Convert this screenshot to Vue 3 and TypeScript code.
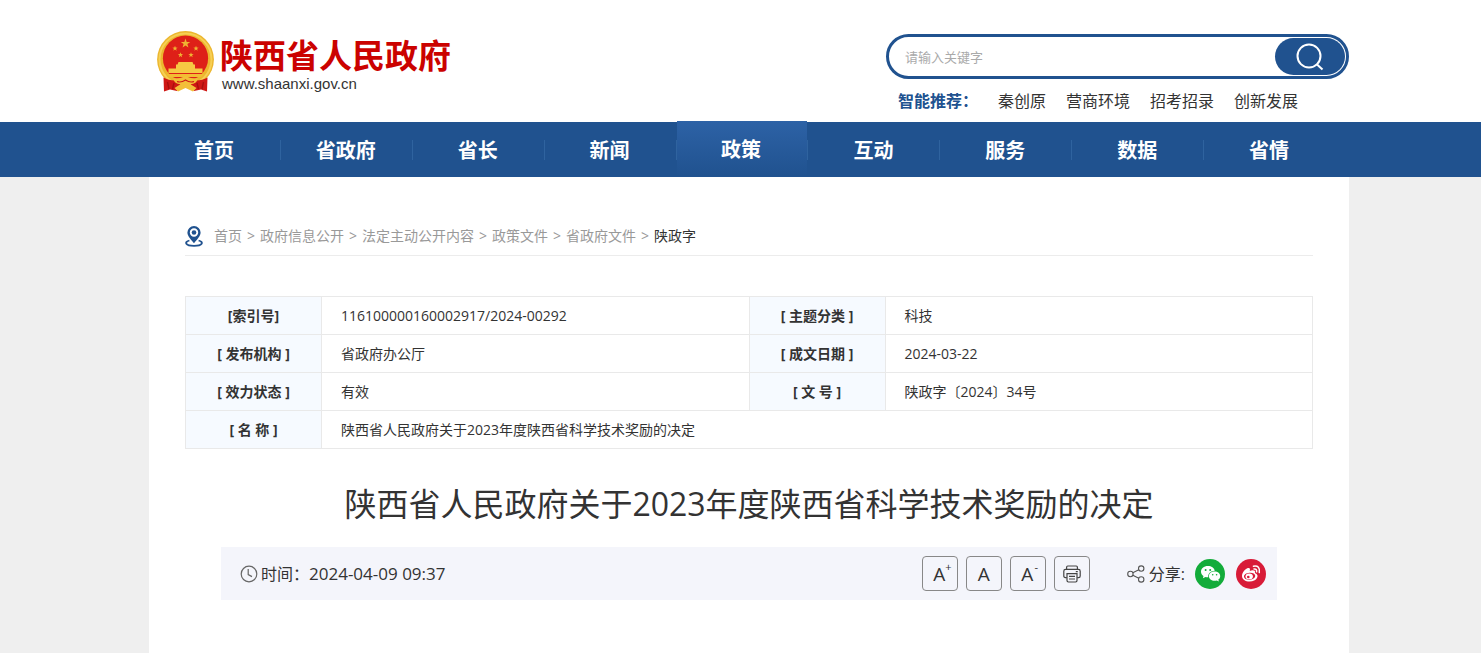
<script setup lang="ts">
interface NavItem { label: string; active?: boolean }

const hotWords: string[] = ['秦创原', '营商环境', '招考招录', '创新发展']

const nav: NavItem[] = [
  { label: '首页' },
  { label: '省政府' },
  { label: '省长' },
  { label: '新闻' },
  { label: '政策', active: true },
  { label: '互动' },
  { label: '服务' },
  { label: '数据' },
  { label: '省情' },
]

const crumbs: string[] = ['首页', '政府信息公开', '法定主动公开内容', '政策文件', '省政府文件']

const rows: string[][] = [
  ['[索引号]', '116100000160002917/2024-00292', '[ 主题分类 ]', '科技'],
  ['[ 发布机构 ]', '省政府办公厅', '[ 成文日期 ]', '2024-03-22'],
  ['[ 效力状态 ]', '有效', '[ 文 号 ]', '陕政字〔2024〕34号'],
]

const title = '陕西省人民政府关于2023年度陕西省科学技术奖励的决定'

function star(cx: number, cy: number, r: number): string {
  return Array.from({ length: 10 }, (_, i) => {
    const a = (Math.PI / 5) * i - Math.PI / 2
    const d = i % 2 ? r * 0.4 : r
    return `${(cx + d * Math.cos(a)).toFixed(2)},${(cy + d * Math.sin(a)).toFixed(2)}`
  }).join(' ')
}

const stars: string[] = [
  star(28.5, 12.5, 5),
  star(18, 17.5, 2.8),
  star(39, 17.5, 2.8),
  star(23.5, 24, 2.8),
  star(34, 24, 2.8),
]
</script>

<template>
  <div class="page">
    <header class="band">
      <div class="container head">
        <a class="logo" href="#">
          <svg class="emblem" viewBox="0 0 58 62" aria-hidden="true">
            <circle cx="28.5" cy="28.5" r="28.4" fill="#ecb62e" />
            <circle cx="28.5" cy="28.5" r="26" fill="none" stroke="#f6cf55" stroke-width="2" />
            <circle cx="28.5" cy="27.2" r="22.6" fill="#de2018" />
            <polygon v-for="s in stars" :key="s" :points="s" fill="#efb432" />
            <path d="M20.5 33.5 L21.5 31 H35.5 L36.5 33.5Z M19 33.5 H38 V37.6 H45.5 V42 H11.5 V37.6 H19Z" fill="#f6c943" />
            <path d="M10 43 H47 L44 46 H13Z" fill="#f3bd33" />
            <path d="M6.5 46.5 Q12 50 20 49.5 L24 53 L20 60 L13 58.5 L7 60.5Z" fill="#cf1714" />
            <path d="M50.5 46.5 Q45 50 37 49.5 L33 53 L37 60 L44 58.5 L50 60.5Z" fill="#cf1714" />
            <path d="M10.5 51 L12 58 M46.5 51 L45 58 M17 52 L15.5 58 M40 52 L41.5 58" stroke="#a90f0d" stroke-width="1.4" />
            <path d="M16 47.5 Q24 47.5 28.5 45 Q33 47.5 41 47.5 Q39.5 53 33.5 53.2 L39.5 57 L36 60.5 L28.5 57 L21 60.5 L17.5 57 L23.5 53.2 Q17.5 53 16 47.5Z" fill="#f3bf38" />
            <path d="M20 50.5 Q24 52 28.5 49 Q33 52 37 50.5" fill="none" stroke="#cf1714" stroke-width="1.2" />
          </svg>
          <span class="logo-text">
            <strong class="logo-name">陕西省人民政府</strong>
            <span class="logo-url">www.shaanxi.gov.cn</span>
          </span>
        </a>
        <div class="search-area">
          <form class="search" @submit.prevent>
            <input type="text" placeholder="请输入关键字" aria-label="请输入关键字" />
            <button type="submit" aria-label="搜索">
              <svg viewBox="0 0 28 28" fill="none" stroke="#fff" stroke-width="2" aria-hidden="true">
                <circle cx="13" cy="13" r="11.5" />
                <path d="M20.5 21 L26.5 26.5" />
              </svg>
            </button>
          </form>
          <div class="hot">
            <strong>智能推荐：</strong>
            <a v-for="w in hotWords" :key="w" href="#">{{ w }}</a>
          </div>
        </div>
      </div>
    </header>

    <nav class="band nav">
      <ul class="container">
        <li v-for="n in nav" :key="n.label" :class="{ active: n.active }">
          <a href="#">{{ n.label }}</a>
        </li>
      </ul>
    </nav>

    <div class="band body">
      <main class="container sheet">
        <div class="crumbs">
          <svg class="pin" viewBox="0 0 18 21" aria-hidden="true">
            <path d="M4.4 14.5 C-1 16 .2 19.8 9 19.8 C17.8 19.8 19 16 13.6 14.5" fill="none" stroke="#20528f" stroke-width="1.8" />
            <path fill-rule="evenodd" d="M9 0 A6.6 6.6 0 0 1 15.6 6.6 C15.6 10.5 11.5 14 9 17.3 C6.5 14 2.4 10.5 2.4 6.6 A6.6 6.6 0 0 1 9 0Z M9 2.3 A4.2 4.2 0 1 0 9 10.7 A4.2 4.2 0 1 0 9 2.3Z" fill="#20528f" />
            <circle cx="9" cy="6.5" r="2.3" fill="#20528f" />
          </svg>
          <template v-for="c in crumbs" :key="c">
            <a href="#">{{ c }}</a><span class="sep">&gt;</span>
          </template>
          <a class="current" href="#">陕政字</a>
        </div>

        <table class="info">
          <colgroup>
            <col class="key" /><col /><col class="key" /><col />
          </colgroup>
          <tbody>
            <tr v-for="r in rows" :key="r[0]">
              <th scope="row">{{ r[0] }}</th>
              <td>{{ r[1] }}</td>
              <th scope="row">{{ r[2] }}</th>
              <td>{{ r[3] }}</td>
            </tr>
            <tr>
              <th scope="row">[ 名 称 ]</th>
              <td colspan="3">{{ title }}</td>
            </tr>
          </tbody>
        </table>

        <h1>{{ title }}</h1>

        <div class="meta">
          <svg class="clock" viewBox="0 0 18 18" fill="none" stroke="#666" stroke-width="1.2" aria-hidden="true">
            <circle cx="9" cy="9" r="7.8" />
            <path d="M8.2 4 V9.6 L12 11.6" />
          </svg>
          <span class="label">时间：</span>
          <time datetime="2024-04-09T09:37">2024-04-09 09:37</time>
          <div class="tools">
            <button type="button" class="scaled" aria-label="放大字号">A<sup>+</sup></button>
            <button type="button" aria-label="默认字号">A</button>
            <button type="button" class="scaled" aria-label="缩小字号">A<sup>-</sup></button>
            <button type="button" aria-label="打印">
              <svg viewBox="0 0 18 18" fill="none" stroke="#444" stroke-width="1.2" aria-hidden="true">
                <path d="M3.6 4.4 V2.2 Q3.6 1 4.8 1 H13.2 Q14.4 1 14.4 2.2 V4.4" />
                <path d="M3.8 12.6 H2.4 Q.8 12.6 .8 11 V6.2 Q.8 4.4 2.6 4.4 H15.4 Q17.2 4.4 17.2 6.2 V11 Q17.2 12.6 15.6 12.6 H14.2" />
                <path d="M4 8.6 H14 V15.6 Q14 17 12.6 17 H5.4 Q4 17 4 15.6Z M6 11.4 H12 M6 14 H12 M12.8 6.6 H14.8" />
              </svg>
            </button>
          </div>
          <div class="share">
            <svg class="share-icon" viewBox="0 0 18 18" fill="none" stroke="#555" stroke-width="1.1" aria-hidden="true">
              <circle cx="3.4" cy="9" r="2.7" />
              <circle cx="14.2" cy="3.6" r="2.7" />
              <circle cx="14.2" cy="14.4" r="2.7" />
              <path d="M5.8 7.8 L11.8 4.8 M5.8 10.2 L11.8 13.2" />
            </svg>
            <span class="label">分享:</span>
            <a class="round wechat" href="#" aria-label="微信">
              <svg viewBox="0 0 30 30" aria-hidden="true">
                <path fill="#fff" d="M13 7 C8.6 7 6 9.7 6 12.7 C6 14.6 7 16.1 8.5 17.1 L7.9 19.3 L10.5 18 Q11.9 18.4 13.3 18.3 C12.7 14.8 15.6 11.9 19.8 11.8 C19.2 9 16.4 7 13 7Z" />
                <path fill="#fff" d="M19.6 12.6 C16.2 12.6 13.9 14.7 13.9 17.2 C13.9 19.8 16.4 21.8 19.6 21.8 Q20.7 21.8 21.8 21.4 L23.9 22.5 L23.3 20.6 C24.5 19.7 25.2 18.6 25.2 17.2 C25.2 14.7 22.9 12.6 19.6 12.6Z" />
                <g fill="#13ac3a">
                  <circle cx="10.6" cy="11.1" r="1" /><circle cx="15.2" cy="11.1" r="1" />
                  <circle cx="17.7" cy="15.8" r=".8" /><circle cx="21.6" cy="15.8" r=".8" />
                </g>
              </svg>
            </a>
            <a class="round weibo" href="#" aria-label="微博">
              <svg viewBox="0 0 30 30" aria-hidden="true">
                <path fill="#fff" fill-rule="evenodd" d="M12.2 9 C14.2 8.7 14.3 10.6 13.7 12 C16.3 11 19.9 10.8 18.9 14 C24.4 15.9 20.8 22.6 13.6 22.6 C9.4 22.6 6 20.5 6 17 C6 13.6 9.6 9.4 12.2 9Z M13.4 13.7 C10.2 14 7.8 15.7 8 17.7 C8.2 19.8 10.9 21 14 20.7 C17.2 20.4 19.4 18.7 19.2 16.6 C19 14.6 16.5 13.4 13.4 13.7Z" />
                <ellipse cx="13.2" cy="17.4" rx="3.7" ry="2.9" fill="#fff" />
                <circle cx="12.3" cy="18" r="1.3" fill="#d81b38" />
                <path d="M18 10 Q21 9.6 20.6 12.8 M17.4 7.2 Q24.4 6 23.3 13.6" fill="none" stroke="#fff" stroke-width="1.5" stroke-linecap="round" />
              </svg>
            </a>
          </div>
        </div>
      </main>
    </div>
  </div>
</template>

<style>
body {
  margin: 0;
  background: #efefef;
}
</style>

<style scoped>
* {
  box-sizing: border-box;
}
.page {
  min-height: 100vh;
  display: flex;
  flex-direction: column;
  font-family: "Open Sans", "Noto Sans CJK SC", sans-serif;
  font-size: 14px;
  color: #333;
  background: #efefef;
}
a {
  color: inherit;
  text-decoration: none;
}
svg {
  display: block;
}
.band {
  padding-left: 17px;
}
.container {
  max-width: 1200px;
  margin: 0 auto;
}
header {
  background: #fff;
}
.head {
  display: flex;
  justify-content: space-between;
  height: 122px;
}
.logo {
  display: flex;
  align-items: flex-start;
  gap: 5px;
  padding: 31px 0 0 8px;
}
.emblem {
  width: 58px;
  height: 62px;
}
.logo-text {
  display: flex;
  flex-direction: column;
  padding-top: 7px;
}
.logo-name {
  font-size: 33px;
  line-height: 36px;
  font-weight: 700;
  color: #cb0200;
}
.logo-url {
  padding-left: 2px;
  font: 15px/20px "Liberation Sans", Arial, sans-serif;
}
.search-area {
  width: 463px;
  padding-top: 34px;
}
.search {
  display: flex;
  height: 45px;
  border: 3px solid #20528f;
  border-radius: 23px;
}
.search input {
  flex: 1;
  min-width: 0;
  margin: 0;
  padding: 1px 16px;
  border: 0;
  outline: 0;
  background: none;
  font: 13px/20px "Open Sans", "Noto Sans CJK SC", sans-serif;
  color: #333;
}
.search input::placeholder {
  color: #aaa;
}
.search button {
  display: flex;
  align-items: center;
  justify-content: center;
  width: 70px;
  margin: 1px;
  padding: 0;
  border: 0;
  border-radius: 19px;
  background: #20528f;
}
.search button svg {
  width: 28px;
  height: 28px;
}
.hot {
  display: flex;
  gap: 20px;
  padding: 10px 0 0 12px;
  font-size: 16px;
  line-height: 24px;
  white-space: nowrap;
}
.hot strong {
  width: 80px;
  color: #20528f;
}
.nav {
  background: #20528f;
}
.nav ul {
  display: flex;
  padding: 0 13px 0 0;
  list-style: none;
}
.nav li {
  flex: 1;
  height: 55px;
  text-align: center;
  font-size: 20px;
  line-height: 57px;
  font-weight: 700;
  color: #fff;
  background: linear-gradient(#2f639f, #2f639f) right 18px / 1px 20px no-repeat;
}
.nav li:last-child {
  background: none;
}
.nav a {
  display: block;
  height: 55px;
  padding-right: 2px;
}
.nav .active a {
  margin: -1px 1px 0 0;
  background: linear-gradient(#2d62a6, #20528f);
}
.body {
  flex: 1;
  display: flex;
}
.sheet {
  flex: 1;
  padding: 46px 36px 53px;
  background: #fff;
}
.crumbs {
  display: flex;
  align-items: center;
  height: 33px;
  padding-bottom: 6px;
  border-bottom: 1px solid #ececec;
  color: #999;
  line-height: 26px;
  white-space: nowrap;
}
.pin {
  width: 18px;
  height: 21px;
  margin-right: 11px;
}
.sep {
  width: 18px;
  text-align: center;
}
.current {
  color: #333;
}
.info {
  width: 100%;
  margin-top: 40px;
  table-layout: fixed;
  border-collapse: collapse;
}
.info .key {
  width: 136px;
}
.info th,
.info td {
  height: 38px;
  padding: 0;
  border: 1px solid #e9e9e9;
  line-height: 24px;
}
.info th {
  text-align: center;
  background: #f6faff;
}
.info td {
  padding-left: 19px;
}
h1 {
  margin: 30px 0 19px;
  text-align: center;
  font-size: 32px;
  line-height: 49px;
  font-weight: 400;
}
.meta {
  display: flex;
  align-items: center;
  height: 53px;
  margin: 0 36px;
  padding: 0 11px 0 19px;
  background: #f4f5fb;
  font-size: 16px;
  line-height: 24px;
}
.clock {
  width: 18px;
  height: 18px;
  margin-right: 3px;
}
time {
  font-size: 17px;
}
.tools {
  display: flex;
  gap: 8px;
  margin-left: auto;
}
.tools button {
  display: flex;
  align-items: center;
  justify-content: center;
  width: 36px;
  height: 35px;
  padding: 0;
  border: 1px solid #888;
  border-radius: 4px;
  background: none;
  font: 19px/24px "Open Sans", sans-serif;
  color: #333;
}
.tools .scaled {
  padding-left: 5px;
}
.tools sup {
  align-self: flex-start;
  width: 6px;
  font-size: 11px;
  line-height: 20px;
}
.tools svg,
.share-icon {
  width: 18px;
  height: 18px;
}
.share {
  display: flex;
  align-items: center;
  margin-left: 37px;
}
.share .label {
  margin: 0 10px 0 4px;
}
.round {
  width: 30px;
  height: 30px;
  border-radius: 50%;
}
.wechat {
  margin-right: 11px;
  background: #13ac3a;
}
.weibo {
  background: #d81b38;
}
</style>
